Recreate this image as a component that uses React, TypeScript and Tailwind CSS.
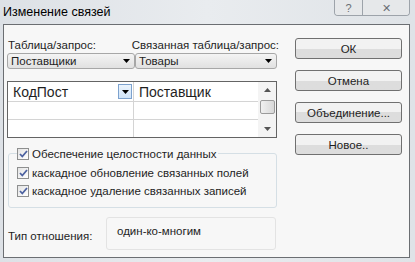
import React from "react";

const Arrow = () => (
  <svg width="7" height="4" viewBox="0 0 7 4">
    <path d="M0 0h7L3.5 4z" fill="#000" />
  </svg>
);

const Combo = ({ value, className }: { value: string; className: string }) => (
  <div
    className={`flex h-[16px] items-center justify-between rounded-[3px] border border-[#a7a7a7] bg-gradient-to-b from-[#f4f4f4] to-[#e1e1e1] pl-[3px] pr-[4px] ${className}`}
  >
    <span>{value}</span>
    <Arrow />
  </div>
);

const Check = ({ label }: { label: string }) => (
  <div className="flex items-center gap-[3px]">
    <span className="flex h-[12px] w-[12px] items-center justify-center border border-[#8e8f8f] bg-gradient-to-br from-[#e4e4e4] to-white">
      <svg width="9" height="8" viewBox="0 0 9 8">
        <path d="M1 4l2.3 2.5L8 1" fill="none" stroke="#4c61a0" strokeWidth="1.8" />
      </svg>
    </span>
    <span>{label}</span>
  </div>
);

const Button = ({ label }: { label: string }) => (
  <div className="flex h-[21px] w-[107px] items-center justify-center rounded-[3px] border border-[#707070] bg-gradient-to-b from-[#f2f2f2] from-50% to-[#dddddd] to-50%">
    {label}
  </div>
);

export default function App() {
  return (
    <div
      className="flex h-[262px] w-[415px] flex-col overflow-hidden whitespace-nowrap bg-gradient-to-r from-[#dde1e6] via-[#e9ecef] to-[#dfe3e7] text-[11.5px] leading-[14px] text-[#1e1e1e]"
      style={{ fontFamily: '"Liberation Sans", Arial, sans-serif' }}
    >
      <div className="flex h-[24px] shrink-0 items-start">
        <span className="mt-[5px] pl-[3px] text-[12.5px] text-black">Изменение связей</span>
        <div className="ml-auto mr-[5px] flex h-[16px] overflow-hidden rounded-b-[4px] border border-t-0 border-[#9da3aa]">
          <span className="flex w-[28px] items-center justify-center border-r border-[#9da3aa] bg-[#e6e8ea] text-[11px] text-[#6a6f75]">?</span>
          <span className="flex w-[46px] items-center justify-center bg-[#e6e8ea] text-[11px] text-[#6a6f75]">✕</span>
        </div>
      </div>
      <div className="mb-[4px] ml-[3px] mr-[5px] flex flex-1 border border-[#6b6e72] bg-[#f7f7f7]">
        <div className="flex w-[275px] flex-col pl-[3px]">
          <div className="mt-[13px] flex">
            <span className="w-[128px] pl-[1px]">Таблица/запрос:</span>
            <span className="pl-[1px]">Связанная таблица/запрос:</span>
          </div>
          <div className="mt-[1px] flex">
            <Combo value="Поставщики" className="w-[128px]" />
            <Combo value="Товары" className="w-[142px]" />
          </div>
          <div className="mt-[12px] flex h-[57px] w-[270px] border border-[#646464] bg-white">
            <div className="flex flex-1 flex-col">
              <div className="flex h-[20px] border-b border-[#d4d4d4]">
                <div className="flex w-[126px] items-center justify-between border-r border-[#d4d4d4] pl-[5px] pr-[1px] text-[14px] leading-[18px]">
                  <span>КодПост</span>
                  <span className="flex h-[15px] w-[14px] items-center justify-center border border-[#7da2ce] bg-gradient-to-b from-[#ebf4fd] to-[#d0e4f8]">
                    <Arrow />
                  </span>
                </div>
                <div className="flex flex-1 items-center pl-[5px] text-[14px] leading-[18px]">Поставщик</div>
              </div>
              <div className="flex h-[18px] border-b border-[#d4d4d4]">
                <div className="w-[126px] border-r border-[#d4d4d4]" />
              </div>
              <div className="flex flex-1">
                <div className="w-[126px] border-r border-[#d4d4d4]" />
              </div>
            </div>
            <div className="flex w-[18px] flex-col items-center bg-[#f4f4f4]">
              <svg className="mt-[6px]" width="7" height="4" viewBox="0 0 7 4">
                <path d="M0 4h7L3.5 0z" fill="#555" />
              </svg>
              <div className="mt-[8px] h-[14px] w-[15px] rounded-[2px] border border-[#9b9b9b] bg-gradient-to-r from-[#f0f0f0] to-[#d8d8d8]" />
              <svg className="mt-[13px]" width="7" height="4" viewBox="0 0 7 4">
                <path d="M0 0h7L3.5 4z" fill="#555" />
              </svg>
            </div>
          </div>
          <div className="relative mt-[15px] ml-[1px] h-[55px] w-[269px] rounded-[3px] border border-[#d5dfe5]">
            <div className="absolute -top-[7px] left-[8px] bg-[#f7f7f7] pr-[2px]">
              <Check label="Обеспечение целостности данных" />
            </div>
            <div className="mt-[12px] flex flex-col gap-[4px] pl-[8px]">
              <Check label="каскадное обновление связанных полей" />
              <Check label="каскадное удаление связанных записей" />
            </div>
          </div>
          <div className="mt-[9px] flex">
            <span className="mt-[12px] w-[99px] pl-[1px]">Тип отношения:</span>
            <div className="h-[33px] w-[170px] rounded-[3px] border border-[#e3e3e3] pl-[10px] pt-[6px]">один-ко-многим</div>
          </div>
        </div>
        <div className="ml-[16px] flex flex-col gap-[11px] pt-[13px]">
          <Button label="ОК" />
          <Button label="Отмена" />
          <Button label="Объединение..." />
          <Button label="Новое.." />
        </div>
      </div>
    </div>
  );
}
